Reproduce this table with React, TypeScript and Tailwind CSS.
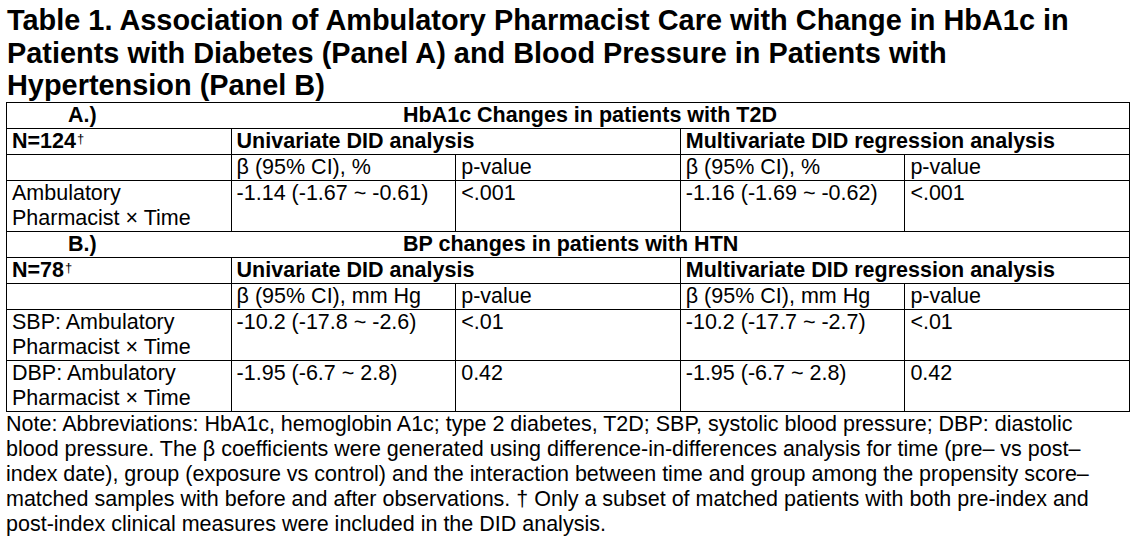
import React from "react";

const cell = "border border-black align-top px-[5px] py-0";

function HeadRow({ label, title }: { label: string; title: string }) {
  return (
    <tr>
      <td colSpan={5} className={`${cell} font-bold px-0`}>
        <div className="flex">
          <span className="w-[391px] pl-[56px] shrink-0">{label}</span>
          <span>{title}</span>
        </div>
      </td>
    </tr>
  );
}

function NRow({ n }: { n: string }) {
  return (
    <tr>
      <td className={`${cell} font-bold`}>
        {n}
        <span className="inline-block align-top font-normal text-[13px] leading-[13px] ml-[1px] mt-[3px]">
          †
        </span>
      </td>
      <td colSpan={2} className={`${cell} font-bold`}>
        Univariate DID analysis
      </td>
      <td colSpan={2} className={`${cell} font-bold`}>
        Multivariate DID regression analysis
      </td>
    </tr>
  );
}

function SubRow({ unit }: { unit: string }) {
  return (
    <tr>
      <td className={cell}></td>
      <td className={cell}>β (95% CI), {unit}</td>
      <td className={cell}>p-value</td>
      <td className={cell}>β (95% CI), {unit}</td>
      <td className={cell}>p-value</td>
    </tr>
  );
}

function DataRow({
  label1,
  label2,
  a,
  b,
  c,
  d,
}: {
  label1: string;
  label2: string;
  a: string;
  b: string;
  c: string;
  d: string;
}) {
  return (
    <tr>
      <td className={cell}>
        {label1}
        <br />
        {label2}
      </td>
      <td className={cell}>{a}</td>
      <td className={cell}>{b}</td>
      <td className={cell}>{c}</td>
      <td className={cell}>{d}</td>
    </tr>
  );
}

export default function App() {
  return (
    <div
      className="w-[1137px] h-[539px] bg-white text-black overflow-hidden"
      style={{ fontFamily: '"Liberation Sans", Arial, sans-serif' }}
    >
      <div className="pt-[4px] pl-[7px] font-bold text-[28.9px] leading-[32.5px] whitespace-nowrap">
        Table 1. Association of Ambulatory Pharmacist Care with Change in HbA1c in
        <br />
        Patients with Diabetes (Panel A) and Blood Pressure in Patients with
        <br />
        Hypertension (Panel B)
      </div>
      <table className="ml-[6px] w-[1123px] table-fixed border-collapse text-[21.5px] leading-[25px] whitespace-nowrap">
        <colgroup>
          <col className="w-[224.6px]" />
          <col className="w-[224.6px]" />
          <col className="w-[224.6px]" />
          <col className="w-[224.6px]" />
          <col className="w-[224.6px]" />
        </colgroup>
        <tbody>
          <HeadRow label="A.)" title="HbA1c Changes in patients with T2D" />
          <NRow n="N=124" />
          <SubRow unit="%" />
          <DataRow
            label1="Ambulatory"
            label2="Pharmacist × Time"
            a="-1.14 (-1.67 ~ -0.61)"
            b="<.001"
            c="-1.16 (-1.69 ~ -0.62)"
            d="<.001"
          />
          <HeadRow label="B.)" title="BP changes in patients with HTN" />
          <NRow n="N=78" />
          <SubRow unit="mm Hg" />
          <DataRow
            label1="SBP: Ambulatory"
            label2="Pharmacist × Time"
            a="-10.2 (-17.8 ~ -2.6)"
            b="<.01"
            c="-10.2 (-17.7 ~ -2.7)"
            d="<.01"
          />
          <DataRow
            label1="DBP: Ambulatory"
            label2="Pharmacist × Time"
            a="-1.95 (-6.7 ~ 2.8)"
            b="0.42"
            c="-1.95 (-6.7 ~ 2.8)"
            d="0.42"
          />
        </tbody>
      </table>
      <div className="pl-[6px] text-[21.5px] leading-[25px] whitespace-nowrap">
        Note: Abbreviations: HbA1c, hemoglobin A1c; type 2 diabetes, T2D; SBP, systolic blood pressure; DBP: diastolic
        <br />
        blood pressure. The β coefficients were generated using difference-in-differences analysis for time (pre– vs post–
        <br />
        index date), group (exposure vs control) and the interaction between time and group among the propensity score–
        <br />
        matched samples with before and after observations. † Only a subset of matched patients with both pre-index and
        <br />
        post-index clinical measures were included in the DID analysis.
      </div>
    </div>
  );
}
